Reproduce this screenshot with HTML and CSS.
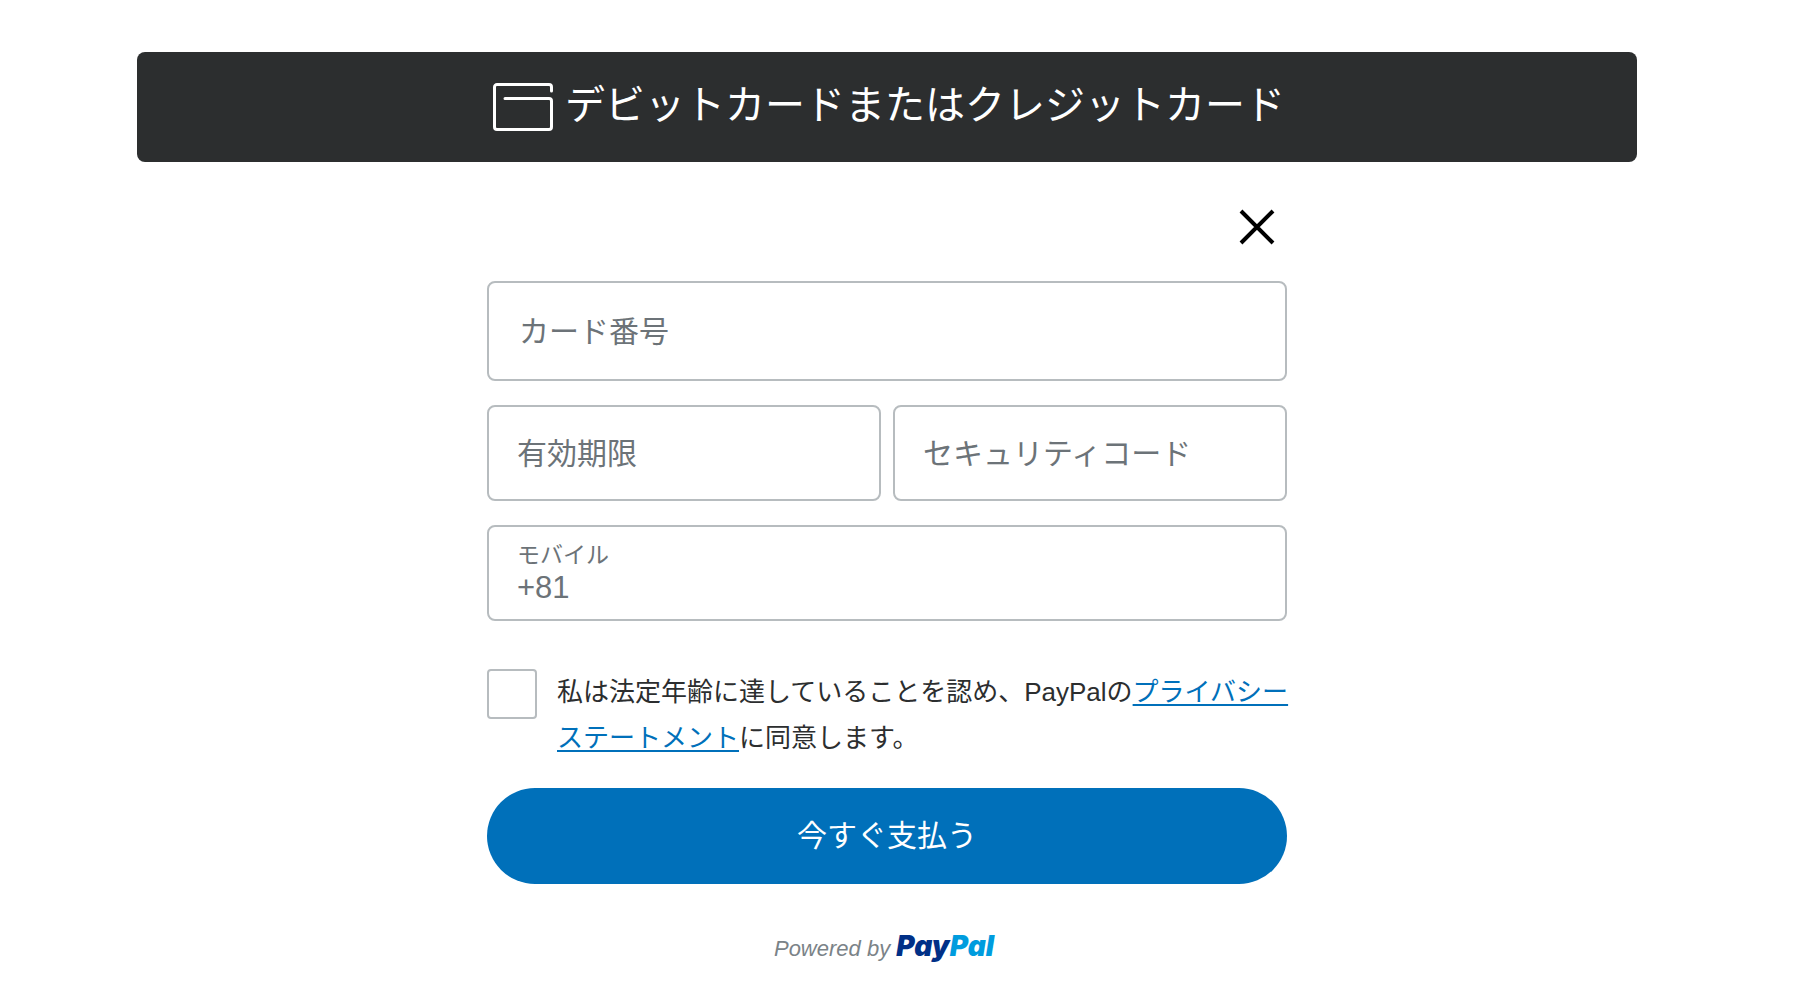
FILE: index.html
```html
<!DOCTYPE html>
<html lang="ja">
<head>
<meta charset="utf-8">
<meta name="viewport" content="width=device-width, initial-scale=1">
<title>デビットカードまたはクレジットカード</title>
<link rel="stylesheet" href="styles.css">
</head>
<body>
<main class="checkout">
  <button class="card-button" type="button">
    <svg class="card-icon" width="60" height="48" viewBox="0 0 60 48" fill="none" stroke="currentColor" stroke-width="3" stroke-linecap="round" stroke-linejoin="round" aria-hidden="true">
      <path d="M58.500 8V4a2.500 2.500 0 0 0-2.500-2.500H4A2.500 2.500 0 0 0 1.500 4v40A2.500 2.500 0 0 0 4 46.500h52a2.500 2.500 0 0 0 2.500-2.500V18a2.500 2.500 0 0 0-2.500-2.500H12"/>
    </svg>
    <span class="card-title">デビットカードまたはクレジットカード</span>
  </button>

  <form class="card-form">
    <div class="close-row">
      <button class="close" type="button" aria-label="閉じる">
        <svg width="34" height="34" viewBox="0 0 34 34" fill="none" stroke="currentColor" stroke-width="4" aria-hidden="true">
          <path d="M1 1l32 32M33 1l-32 32"/>
        </svg>
      </button>
    </div>

    <div class="fields">
      <input class="field field-number" type="text" inputmode="numeric" placeholder="カード番号" aria-label="カード番号">
      <input class="field" type="text" inputmode="numeric" placeholder="有効期限" aria-label="有効期限">
      <input class="field" type="text" inputmode="numeric" placeholder="セキュリティコード" aria-label="セキュリティコード">
      <div class="field field-phone">
        <label class="phone-label" for="phone">モバイル</label>
        <input class="phone-input" id="phone" type="tel" value="+81">
      </div>
    </div>

    <div class="consent">
      <input class="consent-box" id="consent" type="checkbox">
      <label class="consent-text" for="consent">私は法定年齢に達していることを認め、PayPalの<a href="#privacy">プライバシー<br>ステートメント</a>に同意します。</label>
    </div>

    <button class="pay" type="submit">今すぐ支払う</button>
  </form>

  <p class="powered">Powered by <span class="brand"><span class="brand-pay">Pay</span><span class="brand-pal">Pal</span></span></p>
</main>
</body>
</html>
```
FILE: styles.css
```css
* {
  box-sizing: border-box;
}

body {
  margin: 0;
  background: #fff;
  color: #2c2e2f;
  font-family: "Liberation Sans", "Noto Sans CJK JP", sans-serif;
}

button,
input {
  font: inherit;
}

.checkout {
  display: flex;
  flex-direction: column;
  align-items: center;
  padding: 52px 163px 32px 137px;
}

.card-button {
  display: flex;
  align-items: center;
  justify-content: center;
  gap: 12px;
  width: 100%;
  min-height: 110px;
  padding: 0 0 0 4px;
  border: 0;
  border-radius: 8px;
  background: #2c2e2f;
  color: #fff;
}

.card-title {
  padding-bottom: 4px;
  font-size: 40px;
  line-height: 48px;
}

.card-form {
  width: 100%;
  max-width: 800px;
}

.close-row {
  display: flex;
  justify-content: flex-end;
  padding: 40px 5px 29px;
}

.close {
  display: flex;
  padding: 8px;
  border: 0;
  background: none;
  color: #000;
}

.close svg {
  overflow: visible;
}

.fields {
  display: grid;
  grid-template-columns: 1fr 1fr;
  gap: 24px 12px;
}

.field {
  width: 100%;
  min-width: 0;
  height: 96px;
  padding: 2px 28px 0;
  border: 2px solid #b7bcbf;
  border-radius: 8px;
  background: #fff;
  color: #6c7378;
  font-size: 30px;
}

.field::placeholder {
  color: #6c7378;
  opacity: 1;
}

.field-number {
  grid-column: 1 / -1;
  height: 100px;
  padding: 2px 30px 0;
}

.field-phone {
  display: flex;
  flex-direction: column;
  grid-column: 1 / -1;
  padding-top: 12px;
}

.phone-label {
  font-size: 23px;
  line-height: 32px;
}

.phone-input {
  width: 100%;
  height: 34px;
  padding: 0;
  border: 0;
  background: none;
  color: inherit;
  font-size: 31px;
}

.consent {
  display: flex;
  align-items: flex-start;
  gap: 20px;
  margin-top: 48px;
}

.consent-box {
  flex: none;
  width: 50px;
  height: 50px;
  margin: 0;
  border: 2px solid #b7bcbf;
  border-radius: 4px;
  background: #fff;
  appearance: none;
}

.consent-text {
  font-size: 26px;
  line-height: 46px;
  white-space: nowrap;
}

.consent-text a {
  color: #0070ba;
  text-decoration-thickness: 2px;
  text-underline-offset: 3px;
}

.pay {
  display: block;
  width: 100%;
  height: 96px;
  margin-top: 27px;
  padding: 0 0 6px;
  border: 0;
  border-radius: 48px;
  background: #0070ba;
  color: #fff;
  font-size: 30px;
}

.powered {
  margin: 44px 0 0;
  padding-right: 6px;
  color: #7b8388;
  font-size: 22px;
  font-style: italic;
  line-height: 36px;
}

.brand {
  font-family: Inter, sans-serif;
  font-size: 28px;
  font-weight: 900;
}

.brand-pay {
  color: #003087;
}

.brand-pal {
  color: #009cde;
}
```
